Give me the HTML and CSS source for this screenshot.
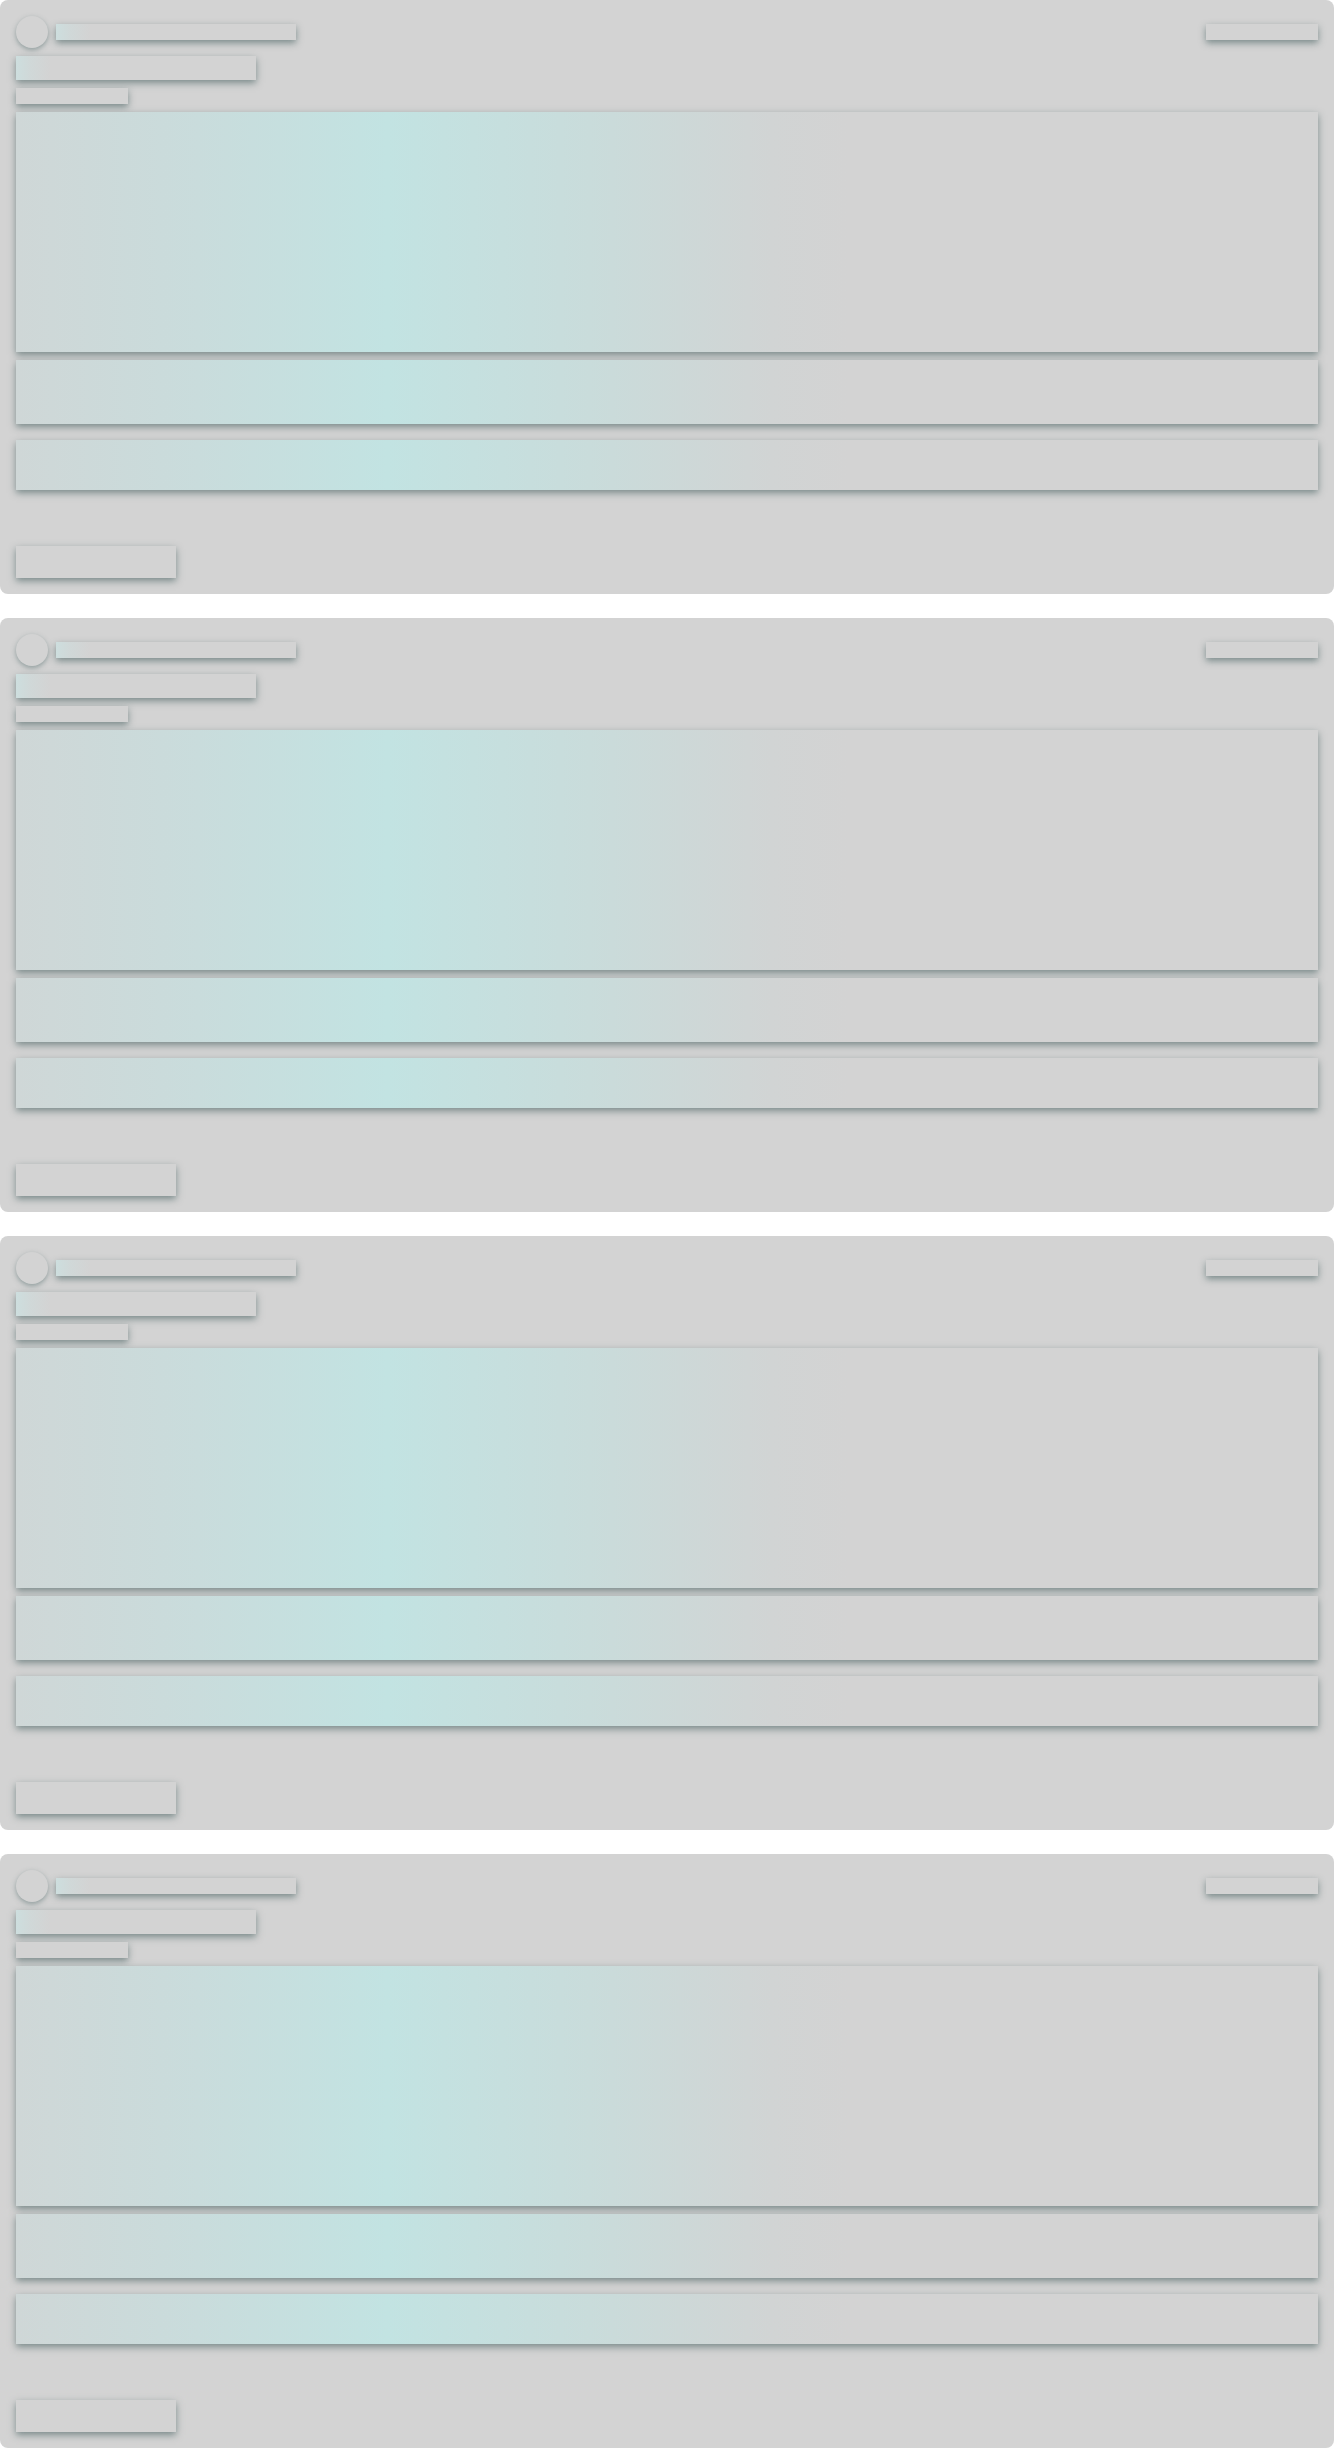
FILE: index.html
```html
<!DOCTYPE html>
<html lang="en">
<head>
<meta charset="utf-8">
<title>Loading</title>
<link rel="stylesheet" href="styles.css">
</head>
<body>
<main class="feed">
  <section class="card">
    <div class="head">
      <div class="avatar"></div>
      <div class="sk name shine-start"></div>
      <div class="spacer"></div>
      <div class="sk meta"></div>
    </div>
    <div class="sk title shine-start"></div>
    <div class="sk sub"></div>
    <div class="sk media shine"></div>
    <div class="sk body shine"></div>
    <div class="sk field shine"></div>
    <div class="sk button"></div>
  </section>
  <section class="card">
    <div class="head">
      <div class="avatar"></div>
      <div class="sk name shine-start"></div>
      <div class="spacer"></div>
      <div class="sk meta"></div>
    </div>
    <div class="sk title shine-start"></div>
    <div class="sk sub"></div>
    <div class="sk media shine"></div>
    <div class="sk body shine"></div>
    <div class="sk field shine"></div>
    <div class="sk button"></div>
  </section>
  <section class="card">
    <div class="head">
      <div class="avatar"></div>
      <div class="sk name shine-start"></div>
      <div class="spacer"></div>
      <div class="sk meta"></div>
    </div>
    <div class="sk title shine-start"></div>
    <div class="sk sub"></div>
    <div class="sk media shine"></div>
    <div class="sk body shine"></div>
    <div class="sk field shine"></div>
    <div class="sk button"></div>
  </section>
  <section class="card">
    <div class="head">
      <div class="avatar"></div>
      <div class="sk name shine-start"></div>
      <div class="spacer"></div>
      <div class="sk meta"></div>
    </div>
    <div class="sk title shine-start"></div>
    <div class="sk sub"></div>
    <div class="sk media shine"></div>
    <div class="sk body shine"></div>
    <div class="sk field shine"></div>
    <div class="sk button"></div>
  </section>
</main>
</body>
</html>
```

FILE: styles.css
```css
html, body {
  margin: 0;
  padding: 0;
  background: #ffffff;
  font-family: "Liberation Sans", Arial, sans-serif;
}

.feed {
  display: flex;
  flex-direction: column;
  gap: 24px;
}

.card {
  background: #d3d3d3;
  border-radius: 8px;
  padding: 16px;
  display: flex;
  flex-direction: column;
  height: 594px;
  box-sizing: border-box;
}

.head {
  display: flex;
  align-items: center;
  gap: 8px;
  height: 32px;
}

.spacer {
  flex: 1;
}

.avatar {
  width: 32px;
  height: 32px;
  border-radius: 50%;
  background: #d3d3d3;
  box-shadow: 0 2px 5px rgba(80, 105, 105, 0.5);
  flex: none;
}

.sk {
  background: #d3d3d3;
  box-shadow: 0 3px 7px rgba(70, 95, 95, 0.62);
  flex: none;
}

.shine {
  background: linear-gradient(90deg, #cfd7d7 0%, #c9dcdc 14%, #c2e3e2 28.5%, #c9dcdb 44%, #d1d4d4 58%, #d3d3d3 64%, #d3d3d3 100%);
}

.shine-start {
  background: linear-gradient(90deg, #cddede 0px, #d0d8d8 14px, #d3d3d3 34px, #d3d3d3 100%);
}

.name {
  width: 240px;
  height: 16px;
}

.meta {
  width: 112px;
  height: 16px;
}

.title {
  width: 240px;
  height: 24px;
  margin-top: 8px;
}

.sub {
  width: 112px;
  height: 16px;
  margin-top: 8px;
}

.media {
  height: 240px;
  margin-top: 8px;
}

.body {
  height: 64px;
  margin-top: 8px;
}

.field {
  height: 50px;
  margin-top: 16px;
}

.button {
  width: 160px;
  height: 32px;
  margin-top: 56px;
}
```
